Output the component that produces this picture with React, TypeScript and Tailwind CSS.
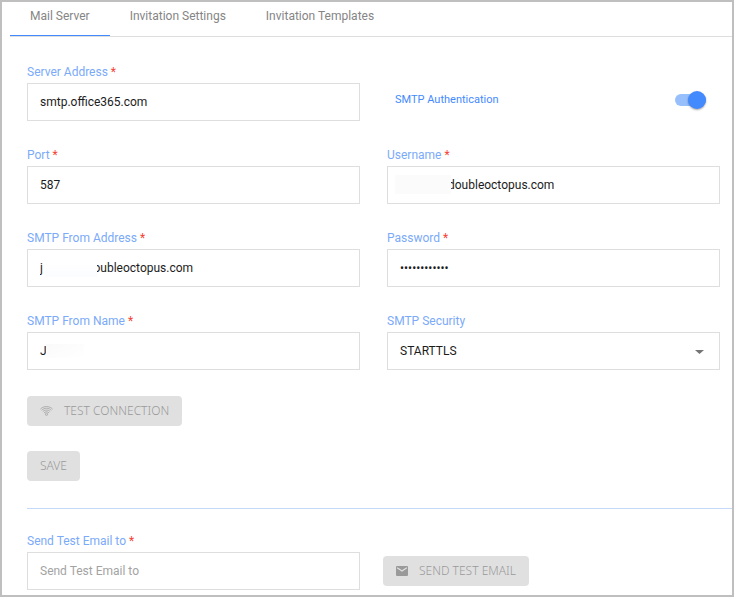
import React, { useState } from 'react'
import clsx from 'clsx'

const inputClass =
  'block w-full h-[38px] border border-[#dedede] bg-white px-3 text-xs text-[#1c1c1c] placeholder-[#a3a3a3] outline-none focus:border-[#448aff]'

const buttonClass =
  "flex h-[30px] items-center rounded bg-[#e0e0e0] px-[13px] font-['Noto_Sans',sans-serif] text-xs font-light text-[#9a9a9a] whitespace-nowrap"

const tabs = ['Mail Server', 'Invitation Settings', 'Invitation Templates']

type FieldProps = {
  id: string
  label: string
  required?: boolean
  children: React.ReactNode
}

function Field({ id, label, required, children }: FieldProps) {
  return (
    <div>
      <label htmlFor={id} className="block h-5 text-xs leading-[18px] text-[#7baaf9]">
        {label} {required && <span className="text-[#f44336]">*</span>}
      </label>
      <div className="relative">{children}</div>
    </div>
  )
}

function WifiIcon() {
  return (
    <svg width="13" height="10" viewBox="0 0 13 10" fill="none" stroke="currentColor" strokeWidth="0.7">
      <path d="M0.4 3.1C3.8 -0.3 9.2 -0.3 12.6 3.1" />
      <path d="M1.6 4.3C4.3 1.6 8.7 1.6 11.4 4.3" />
      <path d="M2.8 5.6C4.9 3.6 8.1 3.6 10.2 5.6" />
      <path d="M4 6.8C5.4 5.5 7.6 5.5 9 6.8" />
      <circle cx="6.5" cy="8.3" r="1.1" />
    </svg>
  )
}

function MailIcon() {
  return (
    <svg width="12" height="10" viewBox="0 0 12 10">
      <rect width="12" height="10" rx="1" fill="currentColor" />
      <path d="M1.2 1.8L6 5L10.8 1.8" fill="none" stroke="#e0e0e0" strokeWidth="1.2" />
    </svg>
  )
}

function Tabs() {
  const [active, setActive] = useState(tabs[0])

  return (
    <div className="ml-2 flex h-[35px] border-b border-[#dedede]" role="tablist">
      {tabs.map((tab) => (
        <button
          key={tab}
          type="button"
          role="tab"
          aria-selected={tab === active}
          onClick={() => setActive(tab)}
          className={clsx(
            'border-b px-5 pb-[5px] text-xs text-[#858585] whitespace-nowrap',
            tab === active ? 'border-b-[#448aff]' : 'border-transparent'
          )}
        >
          {tab}
        </button>
      ))}
    </div>
  )
}

export default function App() {
  const [form, setForm] = useState({
    server: 'smtp.office365.com',
    port: '587',
    username: 'doubleoctopus.com',
    fromAddress: 'j                 oubleoctopus.com',
    password: '············',
    fromName: 'J',
    security: 'STARTTLS',
    testEmail: '',
    auth: true,
  })

  function handleChange(e: React.ChangeEvent<HTMLInputElement | HTMLSelectElement>) {
    const { name, value } = e.target
    setForm((form) => ({
      ...form,
      [name]: value,
    }))
  }

  return (
    <div className="min-h-screen border-2 border-[#bfbfbf] bg-white font-[Roboto,sans-serif]">
      <Tabs />
      <form className="pl-[25px] pt-[26px]" onSubmit={(e) => e.preventDefault()}>
        <div className="grid grid-cols-2 gap-x-[27px] gap-y-[25px] pr-3">
          <Field id="server" label="Server Address" required>
            <input id="server" name="server" className={inputClass} value={form.server} onChange={handleChange} />
          </Field>
          <div className="flex h-[38px] items-center justify-between self-end pl-2 pr-[14px] pb-1">
            <label htmlFor="auth" className="text-[11px] text-[#448aff]">
              SMTP Authentication
            </label>
            <input
              id="auth"
              type="checkbox"
              role="switch"
              checked={form.auth}
              onChange={() => setForm((form) => ({ ...form, auth: !form.auth }))}
              className="relative h-3 w-[31px] appearance-none rounded-full bg-[#bdbdbd] before:absolute before:-top-[3px] before:left-0 before:size-[18px] before:rounded-full before:bg-white before:shadow-[0_1px_2px_rgba(0,0,0,0.35)] checked:bg-[#97bffc] checked:before:left-[13px] checked:before:bg-[#448aff]"
            />
          </div>
          <Field id="port" label="Port" required>
            <input id="port" name="port" className={inputClass} value={form.port} onChange={handleChange} />
          </Field>
          <Field id="username" label="Username" required>
            <input
              id="username"
              name="username"
              className={clsx(inputClass, 'indent-12')}
              value={form.username}
              onChange={handleChange}
            />
            <div className="pointer-events-none absolute left-2 top-[9px] h-[19px] w-[56px] bg-[#fbfbfb]" />
          </Field>
          <Field id="fromAddress" label="SMTP From Address" required>
            <input
              id="fromAddress"
              name="fromAddress"
              className={inputClass}
              value={form.fromAddress}
              onChange={handleChange}
            />
            <div className="pointer-events-none absolute left-[18px] top-3 h-4 w-[52px] bg-linear-to-b from-white to-[#fbfcfe]" />
          </Field>
          <Field id="password" label="Password" required>
            <input
              id="password"
              name="password"
              type="password"
              className={inputClass}
              value={form.password}
              onChange={handleChange}
            />
          </Field>
          <Field id="fromName" label="SMTP From Name" required>
            <input id="fromName" name="fromName" className={inputClass} value={form.fromName} onChange={handleChange} />
            <div className="pointer-events-none absolute left-[19px] top-3 h-[14px] w-[38px] bg-linear-to-br from-[#fafafa] to-white" />
          </Field>
          <Field id="security" label="SMTP Security">
            <select
              id="security"
              name="security"
              className={clsx(inputClass, 'appearance-none')}
              value={form.security}
              onChange={handleChange}
            >
              <option>STARTTLS</option>
            </select>
            <svg className="pointer-events-none absolute right-4 top-[18px]" width="9" height="4" viewBox="0 0 9 4">
              <path d="M0 0H9L4.5 4Z" fill="#757575" />
            </svg>
          </Field>
        </div>

        <div className="mt-[26px] flex flex-col items-start gap-[25px]">
          <button type="button" className={clsx(buttonClass, 'gap-[11px]')} disabled>
            <WifiIcon />
            TEST CONNECTION
          </button>
          <button type="submit" className={buttonClass} disabled>
            SAVE
          </button>
        </div>

        <hr className="mt-[27px] border-[#c5d9f8]" />

        <div className="mt-[23px] grid grid-cols-2 gap-x-[23px] pb-[5px] pr-4">
          <Field id="testEmail" label="Send Test Email to" required>
            <input
              id="testEmail"
              name="testEmail"
              className={inputClass}
              placeholder="Send Test Email to"
              value={form.testEmail}
              onChange={handleChange}
            />
          </Field>
          <div className="flex items-end pb-1">
            <button type="button" className={clsx(buttonClass, 'gap-[11px]')} disabled>
              <MailIcon />
              SEND TEST EMAIL
            </button>
          </div>
        </div>
      </form>
    </div>
  )
}
